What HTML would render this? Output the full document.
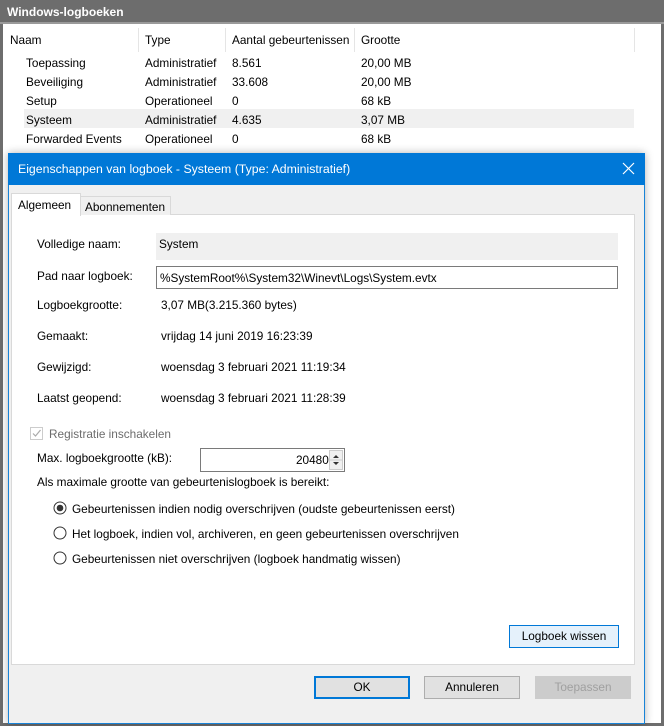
<!DOCTYPE html>
<html><head><style>
*{margin:0;padding:0;box-sizing:border-box}
body{width:664px;height:726px;overflow:hidden;background:#fff;font-family:"Liberation Sans",sans-serif;font-size:11.8px;color:#000;position:relative}
.a{position:absolute;white-space:nowrap}
</style></head><body>
<div class="a" style="left:0;top:0;width:664px;height:726px;border:3px solid #6d6d6d;border-top:none"></div>
<div class="a" style="left:0;top:0;width:664px;height:24px;background:#6d6d6d;border-bottom:2px solid #9a9a9a"></div>
<div class="a" style="left:7px;top:5px;color:#fff;font-weight:bold;font-size:12px">Windows-logboeken</div>
<div class="a" style="left:5px;top:28px;width:630px;height:24px;border-right:1px solid #e5e5e5"></div>
<div class="a" style="left:138px;top:28px;width:1px;height:24px;background:#e5e5e5"></div>
<div class="a" style="left:225px;top:28px;width:1px;height:24px;background:#e5e5e5"></div>
<div class="a" style="left:354px;top:28px;width:1px;height:24px;background:#e5e5e5"></div>
<div class="a" style="left:10px;top:33px">Naam</div>
<div class="a" style="left:145px;top:33px">Type</div>
<div class="a" style="left:232px;top:33px">Aantal gebeurtenissen</div>
<div class="a" style="left:361px;top:33px">Grootte</div>
<div class="a" style="left:24px;top:109px;width:610px;height:19px;background:#f0f0f0"></div>
<div class="a" style="left:26px;top:54px;line-height:19px">Toepassing<br>Beveiliging<br>Setup<br>Systeem<br>Forwarded Events</div>
<div class="a" style="left:145px;top:54px;line-height:19px">Administratief<br>Administratief<br>Operationeel<br>Administratief<br>Operationeel</div>
<div class="a" style="left:232px;top:54px;line-height:19px">8.561<br>33.608<br>0<br>4.635<br>0</div>
<div class="a" style="left:361px;top:54px;line-height:19px">20,00 MB<br>20,00 MB<br>68 kB<br>3,07 MB<br>68 kB</div>

<div class="a" style="left:8px;top:153px;width:637px;height:571px;background:#f0f0f0;border:1px solid #1883d7;box-shadow:0 0 8px rgba(0,0,0,.3)"></div>
<div class="a" style="left:8px;top:153px;width:637px;height:32px;background:#0078d7"></div>
<div class="a" style="left:18px;top:162px;color:#fff;font-size:12.3px">Eigenschappen van logboek - Systeem (Type: Administratief)</div>
<svg class="a" style="left:622px;top:162px" width="13" height="13"><path d="M1 1L12 12M12 1L1 12" stroke="#fff" stroke-width="1.2"/></svg>

<div class="a" style="left:11px;top:214px;width:624px;height:451px;background:#fff;border:1px solid #d9d9d9"></div>
<div class="a" style="left:80px;top:196px;width:91px;height:19px;background:#f0f0f0;border:1px solid #d9d9d9;border-bottom:none"></div>
<div class="a" style="left:85px;top:200px">Abonnementen</div>
<div class="a" style="left:11px;top:193px;width:70px;height:23px;background:#fff;border:1px solid #d9d9d9;border-bottom:none"></div>
<div class="a" style="left:18px;top:198px">Algemeen</div>

<div class="a" style="left:37px;top:237px">Volledige naam:</div>
<div class="a" style="left:156px;top:233px;width:462px;height:27px;background:#f0f0f0"></div>
<div class="a" style="left:159px;top:237px">System</div>
<div class="a" style="left:37px;top:269px">Pad naar logboek:</div>
<div class="a" style="left:156px;top:266px;width:462px;height:23px;border:1px solid #7a7a7a;background:#fff"></div>
<div class="a" style="left:160px;top:271px">%SystemRoot%\System32\Winevt\Logs\System.evtx</div>
<div class="a" style="left:37px;top:298px">Logboekgrootte:</div>
<div class="a" style="left:161px;top:298px">3,07 MB(3.215.360 bytes)</div>
<div class="a" style="left:37px;top:329px">Gemaakt:</div>
<div class="a" style="left:161px;top:329px">vrijdag 14 juni 2019 16:23:39</div>
<div class="a" style="left:37px;top:360px">Gewijzigd:</div>
<div class="a" style="left:161px;top:360px">woensdag 3 februari 2021 11:19:34</div>
<div class="a" style="left:37px;top:391px">Laatst geopend:</div>
<div class="a" style="left:161px;top:391px">woensdag 3 februari 2021 11:28:39</div>

<div class="a" style="left:30px;top:427px;width:13px;height:13px;border:1px solid #ccc;background:#fff"></div>
<svg class="a" style="left:31px;top:428px" width="11" height="11"><path d="M2 5.5L4.5 8L9.5 2" stroke="#aaa" fill="none" stroke-width="1.2"/></svg>
<div class="a" style="left:49px;top:427px;color:#6d6d6d">Registratie inschakelen</div>
<div class="a" style="left:37px;top:451px">Max. logboekgrootte (kB):</div>
<div class="a" style="left:200px;top:448px;width:145px;height:24px;border:1px solid #7a7a7a;background:#fff"></div>
<div class="a" style="left:296px;top:453px">20480</div>
<div class="a" style="left:329px;top:450px;width:14px;height:20px;border:1px solid #ccc;background:#f0f0f0"></div>
<svg class="a" style="left:330px;top:451px" width="12" height="18"><path d="M3 7L6 4L9 7Z M3 11L6 14L9 11Z" fill="#333"/><line x1="0" y1="9" x2="12" y2="9" stroke="#ccc"/></svg>
<div class="a" style="left:37px;top:475px">Als maximale grootte van gebeurtenislogboek is bereikt:</div>
<svg class="a" style="left:53px;top:501px" width="14" height="70"><circle cx="7" cy="7" r="6" fill="#fff" stroke="#333"/><circle cx="7" cy="7" r="3.3" fill="#333"/><circle cx="7" cy="32" r="6" fill="#fff" stroke="#333"/><circle cx="7" cy="57" r="6" fill="#fff" stroke="#333"/></svg>
<div class="a" style="left:72px;top:502px">Gebeurtenissen indien nodig overschrijven (oudste gebeurtenissen eerst)</div>
<div class="a" style="left:72px;top:527px">Het logboek, indien vol, archiveren, en geen gebeurtenissen overschrijven</div>
<div class="a" style="left:72px;top:552px">Gebeurtenissen niet overschrijven (logboek handmatig wissen)</div>

<div class="a" style="left:509px;top:625px;width:110px;height:23px;border:1px solid #0078d7;background:#e5f1fb;text-align:center;line-height:21px">Logboek wissen</div>
<div class="a" style="left:314px;top:676px;width:96px;height:23px;border:2px solid #0078d7;background:#e1e1e1;text-align:center;line-height:19px">OK</div>
<div class="a" style="left:424px;top:676px;width:96px;height:23px;border:1px solid #adadad;background:#e1e1e1;text-align:center;line-height:21px">Annuleren</div>
<div class="a" style="left:535px;top:676px;width:96px;height:23px;border:1px solid #cccccc;background:#cccccc;color:#a0a0a0;text-align:center;line-height:21px">Toepassen</div>
</body></html>
